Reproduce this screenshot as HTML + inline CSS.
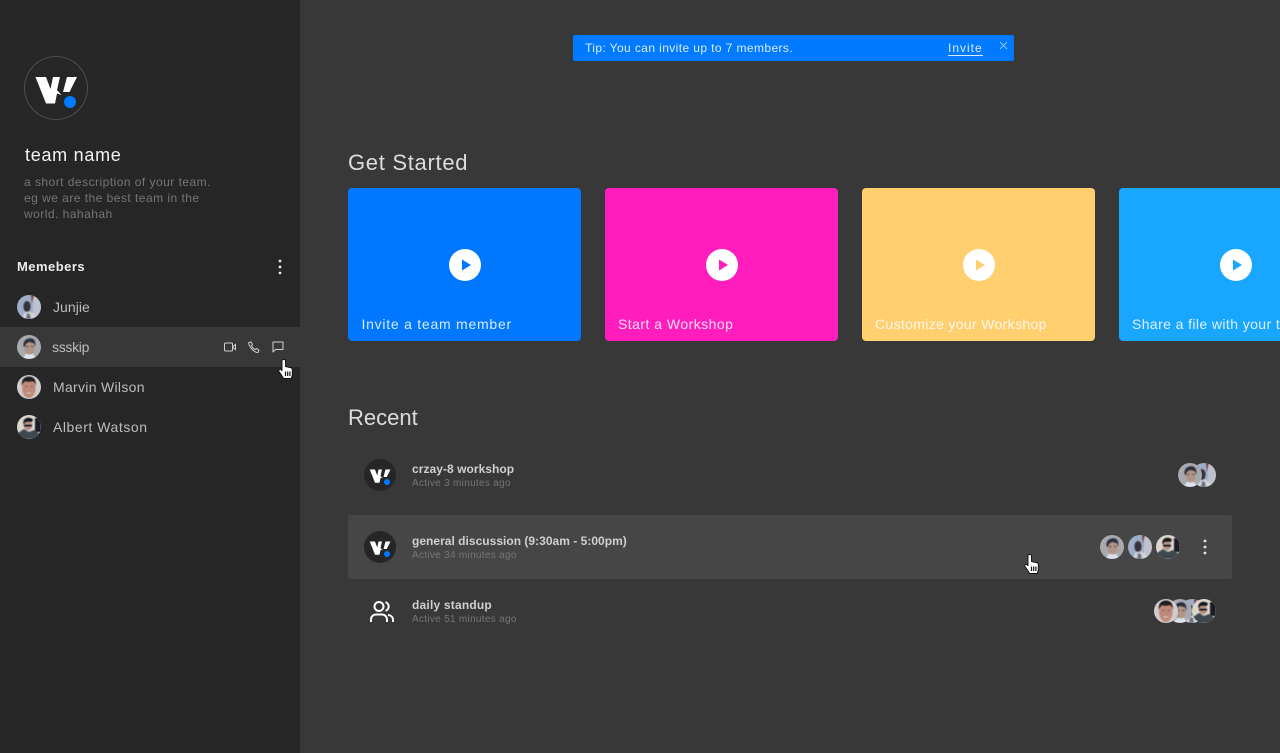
<!DOCTYPE html>
<html lang="en">
<head>
<meta charset="utf-8">
<title>Team</title>
<style>
html,body{margin:0;padding:0;width:1280px;height:753px;overflow:hidden;background:#383838;font-family:"Liberation Sans",sans-serif}
#root{position:relative;width:1280px;height:753px;overflow:hidden;background:#383838}
.a{position:absolute;white-space:nowrap}
.side{position:absolute;left:0;top:0;width:300px;height:753px;background:#262626}
.hover1{position:absolute;left:0;top:327px;width:300px;height:40px;background:#383838}
.hover2{position:absolute;left:348px;top:515px;width:884px;height:64px;background:#464646;border-radius:2px}
.name{font-size:14px;line-height:20px;color:#bdbdbd}
.desc{font-size:12px;line-height:16px;color:#757575;letter-spacing:.47px}
.h{font-size:22px;line-height:28px;color:#dcdcdc}
.card{position:absolute;top:188px;width:233px;height:153px;border-radius:4px;overflow:hidden}
.card .t{position:absolute;left:13px;top:126px;font-size:14px;line-height:20px;color:#fff;opacity:.85;white-space:nowrap}
.card svg{position:absolute;left:101px;top:61px}
.lt{font-size:12px;line-height:16px;font-weight:bold;color:#cfcfcf}
.ls{font-size:10px;line-height:14px;color:#757575;letter-spacing:.3px}
.av{position:absolute;width:24px;height:24px}
</style>
</head>
<body>
<div id="root">
<svg width="0" height="0" style="position:absolute">
<defs>
<clipPath id="c"><circle cx="12" cy="12" r="12"/></clipPath>
<filter id="b" x="-10%" y="-10%" width="120%" height="120%"><feGaussianBlur stdDeviation=".5"/></filter>
<symbol id="logo" viewBox="0 0 64 64">
<path fill="#fff" d="M11.500 21H22L26.500 33 29 21H36L33 34 37.500 39 33 37.500 31 47.500H22Z"/>
<path fill="#fff" d="M43 21H53L45.500 36H39Z"/>
<circle cx="46" cy="46" r="6" fill="#007aff"/>
</symbol>
<symbol id="a1" viewBox="0 0 24 24"><g clip-path="url(#c)"><rect width="24" height="24" fill="#9fadc9"/><g filter="url(#b)"><rect x="16" width="8" height="24" fill="#bfc2ce"/><path d="M14 0h3l-2 9z" fill="#7d3a3e"/><ellipse cx="10" cy="11.500" rx="3.600" ry="5.500" fill="#35323a"/><path d="M5 24l2-6 3-1 4 0 3 2 3 2v3z" fill="#d2d3d9"/><path d="M9 24l1-6 3 1 1 5z" fill="#6e7180"/></g></g></symbol>
<symbol id="a2" viewBox="0 0 24 24"><g clip-path="url(#c)"><rect width="24" height="24" fill="#a9a9b0"/><g filter="url(#b)"><path d="M5 24l4-5h7l4 5z" fill="#dfe2e8"/><ellipse cx="12.500" cy="13" rx="5" ry="6.500" fill="#b09486"/><path d="M6.500 11.500C5.500 5 11 2.500 15 3.500c3 1 4 4 3 8.500l-1-3.500-5-1.500-3 2-1 3z" fill="#2b2d3d"/><path d="M9 11.500h2.500M14 11.500h2.500" stroke="#2a2a30"/></g></g></symbol>
<symbol id="a3" viewBox="0 0 24 24"><g clip-path="url(#c)"><rect width="24" height="24" fill="#d0ced1"/><g filter="url(#b)"><ellipse cx="11.800" cy="13" rx="6.800" ry="10" fill="#c08a7a"/><path d="M4.800 11C4 4 8 1.500 12 1.500S19.500 4 18.700 11C18 8 17 6.500 15.500 6.500 13 7 10 7 8 6.500 6.500 7.500 5.500 9 4.800 11z" fill="#201b1b"/><path d="M8 11.500h2.500M13.500 11.500h2.500" stroke="#5a3d38" stroke-width=".8"/><path d="M9.500 18h4.500" stroke="#e6d5d0" stroke-width=".8"/></g></g></symbol>
<symbol id="a4" viewBox="0 0 24 24"><g clip-path="url(#c)"><rect width="24" height="24" fill="#dcd8d0"/><g filter="url(#b)"><rect x="18" y="3" width="6" height="14" fill="#1d1f25"/><path d="M0 24l1-6 6-4 5 3 5-2 7 5v4z" fill="#3c4a50"/><ellipse cx="11" cy="10.500" rx="4" ry="5" fill="#b3948a"/><path d="M6.500 9.500C5 3 12 1 16 4.500l-1 2.500-6 0z" fill="#17171a"/><path d="M7 9.500h8v2.200H7z" fill="#101012"/></g></g></symbol>
<symbol id="hand" viewBox="0 0 15 20"><path d="M4 1.500C4 .3 7.500 .3 7.500 1.500V7.500L13 8.800c.8.200 1.300.8 1.300 1.600V16l-1 3.500H5.500L3.500 16 1 12.500C.2 11 2 9.700 3 10.700L4 11.700Z" fill="#fff" stroke="#0c0c0c" stroke-width=".9" stroke-linejoin="round"/><path d="M7.500 12.500v4.500M9.700 12.500v4.500M11.900 12.500v4.500" stroke="#111" stroke-width="1.200"/></symbol>
</defs>
</svg>

<div class="side"></div>
<div class="hover1"></div>

<svg class="a" style="left:24px;top:56px" width="64" height="64"><circle cx="32" cy="32" r="31.500" fill="none" stroke="#4e4e4e"/><use href="#logo" width="64" height="64"/></svg>

<div class="a" style="left:25px;top:144px;font-size:18px;line-height:22px;color:#f2f2f2;letter-spacing:.72px">team name</div>
<div class="a desc" style="left:24px;top:174px">a short description of your team.<br>eg we are the best team in the<br>world. hahahah</div>

<div class="a" style="left:17px;top:258px;font-size:13px;line-height:18px;font-weight:bold;color:#ececec;letter-spacing:.47px">Memebers</div>
<svg class="a" style="left:277px;top:259px" width="6" height="16"><circle cx="3" cy="2" r="1.400" fill="#e6e6e6"/><circle cx="3" cy="8" r="1.400" fill="#e6e6e6"/><circle cx="3" cy="14" r="1.400" fill="#e6e6e6"/></svg>

<svg class="av" style="left:17px;top:295px"><use href="#a1"/></svg>
<div class="a name" style="left:53px;top:297px;letter-spacing:.05px">Junjie</div>
<svg class="av" style="left:17px;top:335px"><use href="#a2"/></svg>
<div class="a name" style="left:52px;top:337px;letter-spacing:-.3px">ssskip</div>
<svg class="av" style="left:17px;top:375px"><use href="#a3"/></svg>
<div class="a name" style="left:53px;top:377px;letter-spacing:.3px">Marvin Wilson</div>
<svg class="av" style="left:17px;top:415px"><use href="#a4"/></svg>
<div class="a name" style="left:53px;top:417px;letter-spacing:.55px">Albert Watson</div>

<svg class="a" style="left:224px;top:341px" width="12" height="12" fill="none" stroke="#d0d0d0" stroke-width="1"><rect x=".5" y="2" width="8" height="8" rx="1"/><path d="M8.500 6l3-2.500v5z"/></svg>
<svg class="a" style="left:248px;top:341px" width="12" height="12" fill="none" stroke="#d0d0d0" stroke-width="1"><path d="M1 1.500L3 .8l1.500 2.700-1 1.200c.7 1.700 2 3 3.700 3.800l1.300-1 2.500 1.700-.7 2c-.2.400-.6.500-1 .4C5.500 10.500 1.600 6.500.7 2.200c-.1-.3 0-.6.300-.7z"/></svg>
<svg class="a" style="left:272px;top:341px" width="12" height="12" fill="none" stroke="#d0d0d0" stroke-width="1"><path d="M1 1h10v7.500H3.500L1 11z" stroke-linejoin="round"/></svg>
<svg class="a" style="left:278px;top:359px" width="15" height="20"><use href="#hand"/></svg>

<div class="a" style="left:573px;top:35px;width:441px;height:26px;background:#007aff;border-radius:2px"></div>
<div class="a" style="left:585px;top:40px;font-size:12px;line-height:16px;color:#dcebff;letter-spacing:.4px">Tip: You can invite up to 7 members.</div>
<div class="a" style="left:948px;top:40px;font-size:12px;line-height:16px;color:#dcebff;letter-spacing:1px;border-bottom:1px solid #dcebff;height:15px">Invite</div>
<svg class="a" style="left:999px;top:41px" width="9" height="9" stroke="#8fc1ff" stroke-width="1"><path d="M1 1l7 7M8 1l-7 7"/></svg>

<div class="a h" style="left:348px;top:149px;letter-spacing:.7px">Get Started</div>

<div class="card" style="left:348px;background:#0077ff"><svg width="32" height="32"><circle cx="16" cy="16" r="16" fill="#fff"/><path d="M13 10.500l9 5.500-9 5.500z" fill="#0077ff"/></svg><div class="t" style="left:13.500px;letter-spacing:.75px">Invite a team member</div></div>
<div class="card" style="left:605px;background:#ff1dbe"><svg width="32" height="32"><circle cx="16" cy="16" r="16" fill="#fff"/><path d="M13 10.500l9 5.500-9 5.500z" fill="#ff1dbe"/></svg><div class="t" style="letter-spacing:.47px">Start a Workshop</div></div>
<div class="card" style="left:862px;background:#ffcf70"><svg width="32" height="32"><circle cx="16" cy="16" r="16" fill="#fff"/><path d="M13 10.500l9 5.500-9 5.500z" fill="#ffcf70"/></svg><div class="t" style="letter-spacing:.34px">Customize your Workshop</div></div>
<div class="card" style="left:1119px;background:#18a6ff"><svg width="32" height="32"><circle cx="16" cy="16" r="16" fill="#fff"/><path d="M13 10.500l9 5.500-9 5.500z" fill="#18a6ff"/></svg><div class="t" style="letter-spacing:.4px">Share a file with your team</div></div>

<div class="a h" style="left:348px;top:404px;letter-spacing:0">Recent</div>

<div class="hover2"></div>

<svg class="a" style="left:364px;top:459px" width="32" height="32"><circle cx="16" cy="16" r="16" fill="#262626"/><use href="#logo" width="32" height="32"/></svg>
<div class="a lt" style="left:412px;top:461px;letter-spacing:.05px">crzay-8 workshop</div>
<div class="a ls" style="left:412px;top:477px">Active 3 minutes ago</div>

<svg class="a" style="left:364px;top:531px" width="32" height="32"><circle cx="16" cy="16" r="16" fill="#262626"/><use href="#logo" width="32" height="32"/></svg>
<div class="a lt" style="left:412px;top:533px;letter-spacing:.02px">general discussion (9:30am - 5:00pm)</div>
<div class="a ls" style="left:412px;top:549px">Active 34 minutes ago</div>

<svg class="a" style="left:370px;top:600px" width="24" height="23" fill="none" stroke="#fff" stroke-width="2"><circle cx="9" cy="6.500" r="4.500"/><path d="M15.500 2.200a4.500 4.500 0 0 1 0 8.600"/><path d="M1 22v-2.500c0-3 2.500-5 5-5h6c2.500 0 5 2 5 5V22"/><path d="M18 14.800c2.800.5 5 2.300 5 5V22"/></svg>
<div class="a lt" style="left:412px;top:597px;letter-spacing:.2px">daily standup</div>
<div class="a ls" style="left:412px;top:613px">Active 51 minutes ago</div>

<svg class="av" style="left:1192px;top:463px"><use href="#a1"/></svg>
<svg class="av" style="left:1178px;top:463px"><use href="#a2"/></svg>

<svg class="av" style="left:1100px;top:535px"><use href="#a2"/></svg>
<svg class="av" style="left:1128px;top:535px"><use href="#a1"/></svg>
<svg class="av" style="left:1156px;top:535px"><use href="#a4"/></svg>
<svg class="a" style="left:1202px;top:539px" width="6" height="16"><circle cx="3" cy="2" r="1.400" fill="#e6e6e6"/><circle cx="3" cy="8" r="1.400" fill="#e6e6e6"/><circle cx="3" cy="14" r="1.400" fill="#e6e6e6"/></svg>
<svg class="a" style="left:1024px;top:554px" width="15" height="20"><use href="#hand"/></svg>

<svg class="av" style="left:1180px;top:599px"><use href="#a1"/></svg>
<svg class="av" style="left:1192px;top:599px"><use href="#a4"/></svg>
<svg class="av" style="left:1168px;top:599px"><use href="#a2"/></svg>
<svg class="av" style="left:1154px;top:599px"><use href="#a3"/></svg>
</div>
</body>
</html>
